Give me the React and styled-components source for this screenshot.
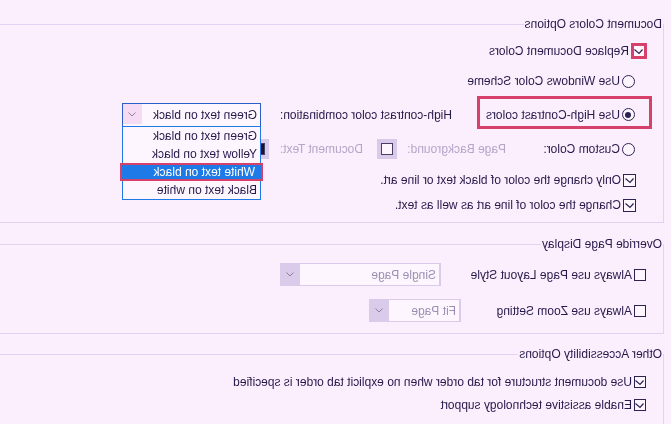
import React from 'react';
import styled, { createGlobalStyle, css } from 'styled-components';

const GlobalStyle = createGlobalStyle`
  html, body {
    margin: 0;
    padding: 0;
    background: #fbeefd;
    overflow: hidden;
  }
  body {
    font-family: "Liberation Sans", Arial, sans-serif;
    font-size: 12px;
    color: #261a4a;
  }
`;

// the whole dialog is shown mirrored
const Page = styled.div`
  width: 671px;
  height: 424px;
  overflow: hidden;
  padding-top: 17px;
  box-sizing: border-box;
  transform: scaleX(-1);
`;

const Group = styled.fieldset`
  margin: ${({ $mt }) => $mt || 0}px -14px 0 7px;
  padding: 0 0 ${({ $pb }) => $pb}px 0;
  border: 1px solid #e3d3f3;
  min-width: 0;
`;

const Legend = styled.legend`
  margin-left: 0;
  padding: 0 1px;
  line-height: 14px;
`;

const Row = styled.div`
  display: flex;
  align-items: center;
  height: ${({ $h }) => $h || 16}px;
  margin-top: ${({ $mt }) => $mt}px;
  padding-left: ${({ $pl }) => $pl}px;
  white-space: nowrap;
`;

const Text = styled.span`
  flex-shrink: 0;
  margin-left: ${({ $ml }) => $ml ?? 2}px;
  ${({ $w }) => $w && css`width: ${$w}px;`}
  ${({ $muted }) => $muted && css`color: #b4a6c8;`}
  ${({ $shift }) => $shift && css`margin-top: ${$shift}px;`}
`;

const Box = styled.span`
  box-sizing: border-box;
  flex-shrink: 0;
  width: ${({ $size }) => $size || 13}px;
  height: ${({ $size }) => $size || 13}px;
  border: 1px solid #2d2352;
  background: #fdf6fe;
  display: inline-flex;
  align-items: center;
  justify-content: center;
  ${({ $flagged }) =>
    $flagged &&
    css`
      width: 16px;
      height: 16px;
      border: 3px solid #d6416b;
    `}
`;

const Radio = styled.span`
  box-sizing: border-box;
  flex-shrink: 0;
  width: 13px;
  height: 13px;
  border: 1px solid #2d2352;
  border-radius: 50%;
  background: #fdf6fe;
  display: inline-flex;
  align-items: center;
  justify-content: center;
  &::after {
    content: '';
    width: 6px;
    height: 6px;
    border-radius: 50%;
    background: ${({ $on }) => ($on ? '#2d2352' : 'transparent')};
  }
`;

const Frame = styled.div`
  box-sizing: border-box;
  width: 175px;
  height: 33px;
  border: 3px solid #d6416b;
  padding: 4px 0 0 14px;
  display: flex;
  align-items: center;
`;

const Combo = styled.div`
  position: relative;
  box-sizing: border-box;
  flex-shrink: 0;
  width: ${({ $w }) => $w}px;
  height: ${({ $h }) => $h}px;
  display: flex;
  margin-left: ${({ $ml }) => $ml || 0}px;
  ${({ $shift }) => $shift && css`margin-top: ${$shift}px;`}
  ${({ $disabled }) =>
    $disabled
      ? css`
          background: #dacbea;
          padding: 1px 0 1px 2px;
          color: #9d8fb4;
        `
      : css`
          border: 1px solid #2c5fc9;
          background: #fdf6fe;
        `}
`;

const Field = styled.div`
  flex: 1;
  background: #fdf6fe;
  padding-left: 3px;
  display: flex;
  align-items: center;
`;

const Arrow = styled.div`
  width: ${({ $disabled }) => ($disabled ? 20 : 19)}px;
  display: flex;
  align-items: center;
  justify-content: center;
  background: ${({ $disabled }) => ($disabled ? '#dacbea' : '#f5dbf3')};
  ${({ $disabled }) => !$disabled && css`margin-bottom: 2px;`}
`;

const List = styled.div`
  position: absolute;
  top: 100%;
  left: -1px;
  right: -1px;
  border: 1px solid #1e78e6;
  background: #fdf6fe;
  z-index: 2;
`;

const Item = styled.div`
  box-sizing: border-box;
  height: 18px;
  line-height: 18px;
  padding-left: 3px;
  ${({ $selected }) =>
    $selected &&
    css`
      margin: 0 -3px;
      padding-left: 6px;
      line-height: 14px;
      border: 2px solid #d6416b;
      background: #1e7ae6;
      color: #fff;
    `}
`;

const Swatch = styled.span`
  box-sizing: border-box;
  flex-shrink: 0;
  width: 20px;
  height: 20px;
  background: #d9cae9;
  display: inline-flex;
  align-items: center;
  justify-content: center;
  &::after {
    content: '';
    box-sizing: border-box;
    width: 12px;
    height: 12px;
    border: 1px solid #4a3d66;
    background: ${({ $fill }) => $fill || '#fdf6fe'};
  }
`;

const Check = () => (
  <svg width="9" height="7" viewBox="0 0 9 7">
    <polyline points="0.5,1.5 4,5.5 8.5,1.5" fill="none" stroke="#2d2352" strokeWidth="1.2" />
  </svg>
);

const Chevron = () => (
  <svg width="8" height="5" viewBox="0 0 8 5">
    <polyline points="0.5,0.5 4,4 7.5,0.5" fill="none" stroke="#8c7fa5" strokeWidth="1" />
  </svg>
);

const CheckBox = ({ checked, flagged, size }) => (
  <Box $flagged={flagged} $size={size}>
    {checked && <Check />}
  </Box>
);

const Select = ({ value, w, h, disabled, ml, shift, children }) => (
  <Combo $w={w} $h={h} $disabled={disabled} $ml={ml} $shift={shift}>
    <Field>{value}</Field>
    <Arrow $disabled={disabled}>
      <Chevron />
    </Arrow>
    {children}
  </Combo>
);

const combos = ['Green text on black', 'Yellow text on black', 'White text on black', 'Black text on white'];

export default function App() {
  return (
    <>
      <GlobalStyle />
      <Page>
        <Group $pb={9}>
          <Legend>Document Colors Options</Legend>
          <Row $mt={12} $pl={16}>
            <CheckBox checked flagged />
            <Text $ml={2}>Replace Document Colors</Text>
          </Row>
          <Row $mt={14} $pl={28}>
            <Radio />
            <Text>Use Windows Color Scheme</Text>
          </Row>
          <Row $mt={7} $pl={11} $h={33}>
            <Frame>
              <Radio $on />
              <Text>Use High-Contrast colors</Text>
            </Frame>
            <Text $ml={25} $w={191} $shift={5}>
              High-contrast color combination:
            </Text>
            <Select value="Green text on black" w={139} h={24} shift={5}>
              <List>
                {combos.map((c) => (
                  <Item key={c} $selected={c === 'White text on black'}>
                    {c}
                  </Item>
                ))}
              </List>
            </Select>
          </Row>
          <Row $mt={10} $pl={28} $h={20}>
            <Radio />
            <Text $w={114}>Custom Color:</Text>
            <Text $ml={0} $w={109} $muted>
              Page Background:
            </Text>
            <Swatch />
            <Text $ml={14} $w={94} $muted>
              Document Text:
            </Text>
            <Swatch $fill="#1a1030" />
          </Row>
          <Row $mt={13} $pl={27}>
            <CheckBox checked />
            <Text>Only change the color of black text or line art.</Text>
          </Row>
          <Row $mt={9} $pl={27}>
            <CheckBox checked />
            <Text>Change the color of line art as well as text.</Text>
          </Row>
        </Group>

        <Group $mt={14} $pb={11}>
          <Legend>Override Page Display</Legend>
          <Row $mt={12} $pl={17} $h={23}>
            <CheckBox size={12} />
            <Text $ml={2} $w={191}>
              Always use Page Layout Style
            </Text>
            <Select value="Single Page" w={161} h={23} disabled />
          </Row>
          <Row $mt={13} $pl={17} $h={23}>
            <CheckBox size={12} />
            <Text $ml={2} $w={171}>
              Always use Zoom Setting
            </Text>
            <Select value="Fit Page" w={92} h={23} disabled />
          </Row>
        </Group>

        <Group $mt={13} $pb={20}>
          <Legend>Other Accessibility Options</Legend>
          <Row $mt={13} $pl={17}>
            <CheckBox checked size={12} />
            <Text $ml={2}>Use document structure for tab order when no explicit tab order is specified</Text>
          </Row>
          <Row $mt={7} $pl={17}>
            <CheckBox checked size={12} />
            <Text $ml={2}>Enable assistive technology support</Text>
          </Row>
        </Group>
      </Page>
    </>
  );
}
